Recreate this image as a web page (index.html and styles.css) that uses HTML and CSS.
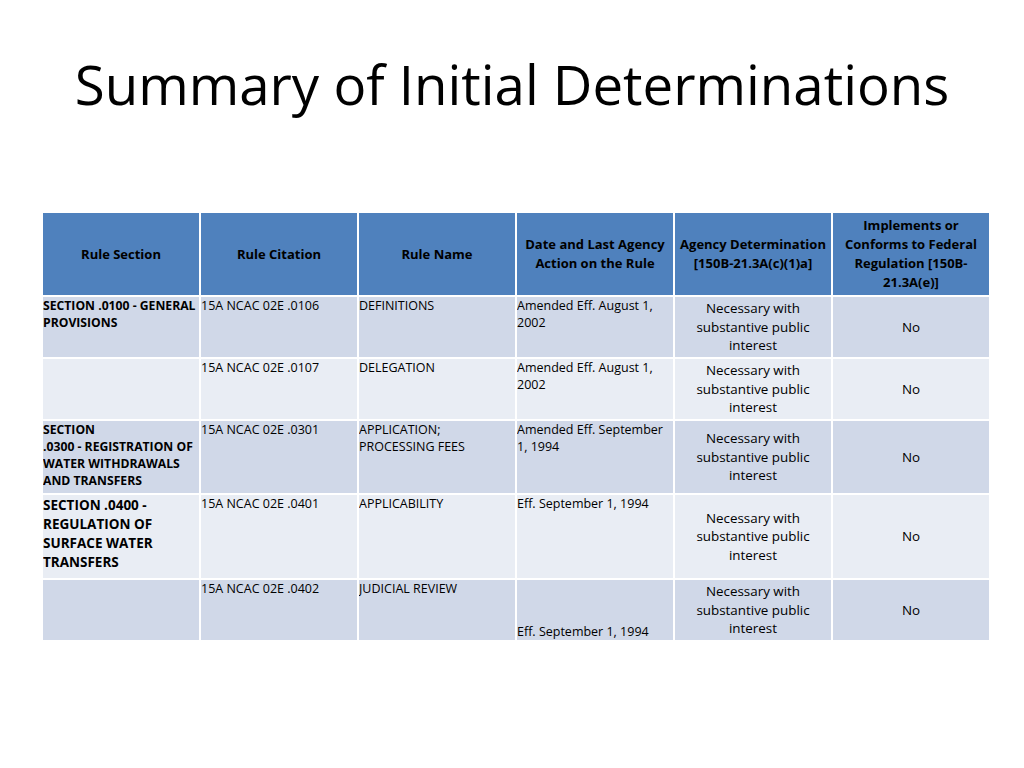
FILE: index.html
```html
<!DOCTYPE html>
<html lang="en">
<head>
<meta charset="utf-8">
<title>Summary of Initial Determinations</title>
<link rel="stylesheet" href="styles.css">
</head>
<body>
<div class="slide">
  <h1 class="title">Summary of Initial Determinations</h1>
  <div class="table-wrap">
    <table class="rules">
      <colgroup>
        <col class="c"><col class="c"><col class="c"><col class="c"><col class="c"><col class="c">
      </colgroup>
      <thead>
        <tr>
          <th>Rule Section</th>
          <th>Rule Citation</th>
          <th>Rule Name</th>
          <th>Date and Last Agency Action on the Rule</th>
          <th>Agency Determination [150B-21.3A(c)(1)a]</th>
          <th><span class="narrow">Implements or Conforms to Federal Regulation [150B-21.3A(e)]</span></th>
        </tr>
      </thead>
      <tbody>
        <tr class="r1 odd">
          <td class="sec">SECTION .0100 - GENERAL PROVISIONS</td>
          <td>15A NCAC 02E .0106</td>
          <td>DEFINITIONS</td>
          <td>Amended Eff. August 1, 2002</td>
          <td class="det">Necessary with substantive public interest</td>
          <td class="fed">No</td>
        </tr>
        <tr class="r2 even">
          <td class="sec"></td>
          <td>15A NCAC 02E .0107</td>
          <td>DELEGATION</td>
          <td>Amended Eff. August 1, 2002</td>
          <td class="det">Necessary with substantive public interest</td>
          <td class="fed">No</td>
        </tr>
        <tr class="r3 odd">
          <td class="sec">SECTION<br>.0300 - REGISTRATION OF<br>WATER WITHDRAWALS<br>AND TRANSFERS</td>
          <td>15A NCAC 02E .0301</td>
          <td>APPLICATION;<br>PROCESSING FEES</td>
          <td>Amended Eff. September<br>1, 1994</td>
          <td class="det">Necessary with substantive public interest</td>
          <td class="fed">No</td>
        </tr>
        <tr class="r4 even">
          <td class="sec big">SECTION .0400 -<br>REGULATION OF<br>SURFACE WATER<br>TRANSFERS</td>
          <td>15A NCAC 02E .0401</td>
          <td>APPLICABILITY</td>
          <td>Eff. September 1, 1994</td>
          <td class="det">Necessary with substantive public interest</td>
          <td class="fed">No</td>
        </tr>
        <tr class="r5 odd">
          <td class="sec"></td>
          <td>15A NCAC 02E .0402</td>
          <td>JUDICIAL REVIEW</td>
          <td class="bottom">Eff. September 1, 1994</td>
          <td class="det">Necessary with substantive public interest</td>
          <td class="fed">No</td>
        </tr>
      </tbody>
    </table>
  </div>
</div>
</body>
</html>
```

FILE: styles.css
```css
html, body {
  margin: 0;
  padding: 0;
  background: #ffffff;
}

body {
  font-family: "Open Sans", "Noto Sans", sans-serif;
  color: #000000;
}

.slide {
  width: 1024px;
  height: 768px;
  box-sizing: border-box;
  padding-top: 57px;
}

.title {
  margin: 0;
  font-weight: 400;
  font-size: 54.6px;
  line-height: 55px;
  text-align: center;
}

.table-wrap {
  margin-top: 99px;
  padding-left: 41px;
}

.rules {
  border-collapse: separate;
  border-spacing: 2px;
  table-layout: fixed;
  width: 950px;
}

.rules col.c {
  width: 156px;
}

.rules th,
.rules td {
  padding: 0;
  overflow: hidden;
}

.rules th {
  background: #4f81bd;
  height: 82px;
  font-weight: 700;
  font-size: 13px;
  line-height: 19px;
  text-align: center;
  vertical-align: middle;
}

.rules th .narrow {
  display: block;
  padding: 0 6px;
}

.rules td {
  font-size: 12.5px;
  line-height: 17px;
  text-align: left;
  vertical-align: top;
  white-space: normal;
}

.rules tr.odd td { background: #d0d8e8; }
.rules tr.even td { background: #e9edf4; }

.r1 td, .r2 td, .r5 td { height: 60px; }
.r3 td { height: 72px; }
.r4 td { height: 82px; }

.rules td.sec {
  font-weight: 700;
  font-size: 12.2px;
}

.rules td.sec.big {
  font-size: 13.5px;
  line-height: 19px;
  padding-top: 1px;
}

.rules td.det,
.rules td.fed {
  font-size: 13.4px;
  line-height: 18.5px;
  text-align: center;
  vertical-align: middle;
}

.rules td.bottom {
  vertical-align: bottom;
}
```
